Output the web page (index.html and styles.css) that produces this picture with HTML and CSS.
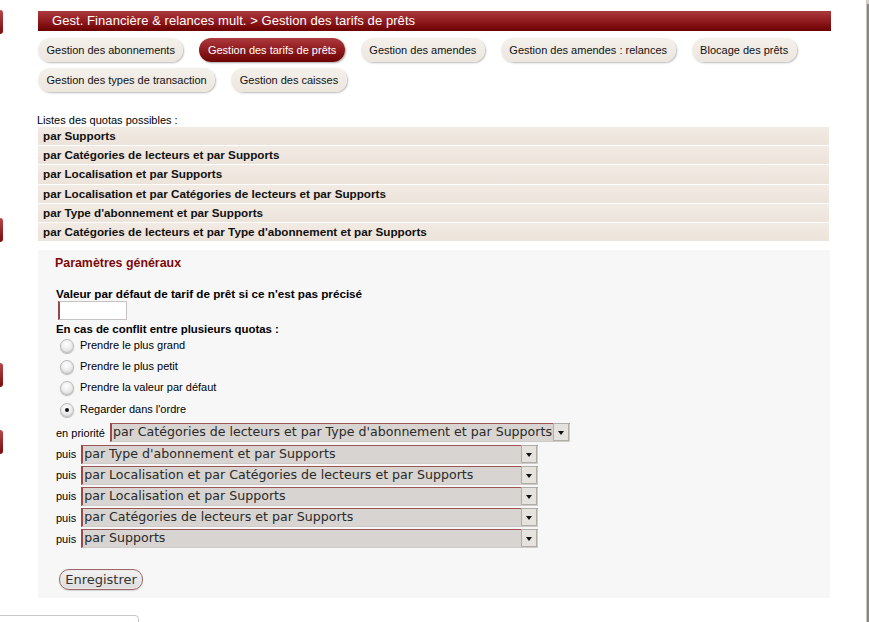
FILE: index.html
```html
<!DOCTYPE html>
<html lang="fr">
<head>
<meta charset="utf-8">
<title>Gestion des tarifs de prêts</title>
<link rel="stylesheet" href="styles.css">
</head>
<body>
<span class="edge-blob blob-1"></span>
<span class="edge-blob blob-2"></span>
<span class="edge-blob blob-3"></span>
<span class="edge-blob blob-4"></span>
<span class="right-rule"></span>
<div class="footer-stub"></div>

<div class="page">
  <h1 class="title-bar">Gest. Financière &amp; relances mult. &gt; Gestion des tarifs de prêts</h1>

  <nav class="tabs">
    <a class="tab">Gestion des abonnements</a>
    <a class="tab tab-active">Gestion des tarifs de prêts</a>
    <a class="tab">Gestion des amendes</a>
    <a class="tab">Gestion des amendes : relances</a>
    <a class="tab">Blocage des prêts</a>
    <a class="tab">Gestion des types de transaction</a>
    <a class="tab">Gestion des caisses</a>
  </nav>

  <div class="quota-intro">Listes des quotas possibles :</div>
  <ul class="quota-list">
    <li>par Supports</li>
    <li>par Catégories de lecteurs et par Supports</li>
    <li>par Localisation et par Supports</li>
    <li>par Localisation et par Catégories de lecteurs et par Supports</li>
    <li>par Type d'abonnement et par Supports</li>
    <li>par Catégories de lecteurs et par Type d'abonnement et par Supports</li>
  </ul>

  <form class="panel">
    <h2 class="panel-title">Paramètres généraux</h2>
    <div class="field-label first-label">Valeur par défaut de tarif de prêt si ce n'est pas précisé</div>
    <input class="text-input" type="text">
    <div class="field-label conflict-label">En cas de conflit entre plusieurs quotas :</div>
    <div class="radios">
      <label class="radio-row"><input type="radio" name="conflit"><span>Prendre le plus grand</span></label>
      <label class="radio-row"><input type="radio" name="conflit"><span>Prendre le plus petit</span></label>
      <label class="radio-row"><input type="radio" name="conflit"><span>Prendre la valeur par défaut</span></label>
      <label class="radio-row"><input type="radio" name="conflit" checked><span>Regarder dans l'ordre</span></label>
    </div>

    <div class="order">
      <div class="order-row">
        <span class="order-label">en priorité</span>
        <div class="select select-wide"><span class="select-value">par Catégories de lecteurs et par Type d'abonnement et par Supports</span><span class="select-arrow"></span></div>
      </div>
      <div class="order-row">
        <span class="order-label">puis</span>
        <div class="select"><span class="select-value">par Type d'abonnement et par Supports</span><span class="select-arrow"></span></div>
      </div>
      <div class="order-row">
        <span class="order-label">puis</span>
        <div class="select"><span class="select-value">par Localisation et par Catégories de lecteurs et par Supports</span><span class="select-arrow"></span></div>
      </div>
      <div class="order-row">
        <span class="order-label">puis</span>
        <div class="select"><span class="select-value">par Localisation et par Supports</span><span class="select-arrow"></span></div>
      </div>
      <div class="order-row">
        <span class="order-label">puis</span>
        <div class="select"><span class="select-value">par Catégories de lecteurs et par Supports</span><span class="select-arrow"></span></div>
      </div>
      <div class="order-row">
        <span class="order-label">puis</span>
        <div class="select"><span class="select-value">par Supports</span><span class="select-arrow"></span></div>
      </div>
    </div>

    <button class="save-button" type="button">Enregistrer</button>
  </form>
</div>
</body>
</html>
```

FILE: styles.css
```css
html {
  overflow: hidden;
}

body {
  margin: 0;
  background: #ffffff;
  font-family: "Liberation Sans", Arial, sans-serif;
  font-size: 11px;
  color: #000;
  position: relative;
  min-height: 622px;
}

.page {
  padding: 11px 0 0 38px;
  width: 793px;
}

/* Title bar */
.title-bar {
  margin: 0;
  height: 20px;
  line-height: 20px;
  padding-left: 14px;
  font-size: 13px;
  font-weight: normal;
  letter-spacing: 0.07px;
  color: #ffffff;
  background: linear-gradient(#ab3b3e 0%, #951e22 45%, #6a0000 100%);
}

/* Tabs */
.tabs {
  display: flex;
  flex-wrap: wrap;
  gap: 6px 16px;
  margin-top: 7px;
  width: 780px;
}

.tab {
  display: block;
  height: 24px;
  line-height: 24px;
  padding: 0 8.5px;
  border-radius: 12px;
  background: linear-gradient(#f4f0eb, #ece6df);
  box-shadow: 1px 1px 2px rgba(0, 0, 0, 0.28);
  font-size: 11px;
  color: #111;
  white-space: nowrap;
}

.tab-active {
  color: #ffffff;
  background: linear-gradient(#ad3a3d 0%, #8e1a1d 50%, #6c0404 100%);
  box-shadow: 1px 1px 2px rgba(0, 0, 0, 0.35);
}

/* Quota list */
.quota-intro {
  margin-top: 22px;
  margin-left: -1px;
  height: 13px;
  line-height: 13px;
  font-size: 11px;
}

.quota-list {
  list-style: none;
  margin: 0;
  padding: 0;
}

.quota-list li {
  height: 18.2px;
  line-height: 18px;
  margin-bottom: 1px;
  padding-left: 5px;
  background: linear-gradient(#f2ebe4, #ece3da);
  font-weight: bold;
  font-size: 11.7px;
  color: #111;
  width: 786px;
}

/* Panel */
.panel {
  margin-top: 9px;
  width: 775px;
  padding: 5px 0 8px 17px;
  background: #f7f7f7;
}

.panel-title {
  margin: 0;
  height: 16px;
  line-height: 16px;
  font-size: 12.4px;
  font-weight: bold;
  color: #7c0a0a;
}

.field-label {
  height: 14px;
  line-height: 14px;
  margin-left: 1px;
  font-weight: bold;
  font-size: 11.7px;
}

.first-label {
  margin-top: 16px;
}

.conflict-label {
  margin-top: 2px;
  font-size: 11.4px;
}

.text-input {
  display: block;
  box-sizing: border-box;
  width: 69px;
  height: 19px;
  margin: 0 0 0 3px;
  padding: 0 2px;
  border: 1px solid #c9c2c2;
  border-left: 2px solid #8c4a4a;
  background: #ffffff;
}

.radios {
  display: flex;
  flex-direction: column;
  margin-top: -2px;
}

.radio-row {
  display: flex;
  align-items: center;
  height: 21.3px;
  font-size: 11px;
}

.radio-row input {
  appearance: none;
  -webkit-appearance: none;
  margin: 2px 6px 0 5px;
  width: 14px;
  height: 14px;
  border-radius: 50%;
  border: 1px solid #b9b9b9;
  background: radial-gradient(circle at 45% 35%, #ffffff 0%, #eeeeee 45%, #cfcfcf 100%);
  box-shadow: 0 1px 1px rgba(0, 0, 0, 0.25);
  box-sizing: border-box;
  position: relative;
}

.radio-row input:checked::after {
  content: "";
  position: absolute;
  left: 4px;
  top: 4px;
  width: 4px;
  height: 4px;
  border-radius: 50%;
  background: #111;
}

/* Ordering selects */
.order {
  margin-top: 3px;
  display: flex;
  flex-direction: column;
}

.order-row {
  display: flex;
  align-items: center;
  height: 21.2px;
  margin-left: 1px;
}

.order-label {
  font-size: 11px;
  margin-right: 5px;
}

.select {
  display: flex;
  box-sizing: border-box;
  width: 457px;
  height: 19px;
  border-top: 1px solid #9c5555;
  border-left: 2px solid #9e4848;
  border-bottom: 1px solid #cfcbc8;
  border-right: 1px solid #cfcbc8;
  background: #d8d4d1;
}

.select-wide {
  width: 460px;
}

.select-value {
  flex: 1;
  overflow: hidden;
  white-space: nowrap;
  padding-left: 1px;
  font-family: "DejaVu Sans", sans-serif;
  font-size: 12.6px;
  line-height: 16px;
  color: #2a2a2a;
}

.select-arrow {
  position: relative;
  box-sizing: border-box;
  width: 16px;
  height: 18px;
  margin-top: -1px;
  border: 1px solid #b0aca8;
  background: #e6e2de;
}

.select-arrow::after {
  content: "";
  position: absolute;
  left: 4px;
  top: 7px;
  border-left: 3px solid transparent;
  border-right: 3px solid transparent;
  border-top: 4px solid #111;
}

/* Save button */
.save-button {
  display: block;
  margin: 20px 0 0 4px;
  box-sizing: border-box;
  width: 84px;
  height: 21px;
  padding: 0;
  border: 1px solid #9a6a6a;
  border-radius: 10px;
  background: linear-gradient(#f3f3f3, #dcdcdc);
  box-shadow: inset 0 0 0 1px #f0e8e8, 0 1px 1px rgba(0, 0, 0, 0.15);
  font-family: "DejaVu Sans", sans-serif;
  font-size: 13px;
  color: #333;
}

/* Decorative page edges */
.edge-blob {
  position: absolute;
  left: 0;
  width: 3px;
  height: 24px;
  border-radius: 0 3px 3px 0;
  background: linear-gradient(#b8474a, #7a0c0c);
}

.blob-1 { top: 10px; }
.blob-2 { top: 218px; }
.blob-3 { top: 363px; }
.blob-4 { top: 430px; }

.right-rule {
  position: absolute;
  top: 0;
  left: 866px;
  width: 2px;
  height: 622px;
  background: linear-gradient(#d4d0cc 0, #d4d0cc 4px, #8a8684 4px, #8a8684 100%);
  border-left: 1px solid #c8c4c0;
}

.footer-stub {
  position: absolute;
  left: -1px;
  top: 615px;
  width: 138px;
  height: 10px;
  border: 1px solid #c8c8c8;
  border-radius: 0 4px 0 0;
  background: #ffffff;
}
```
